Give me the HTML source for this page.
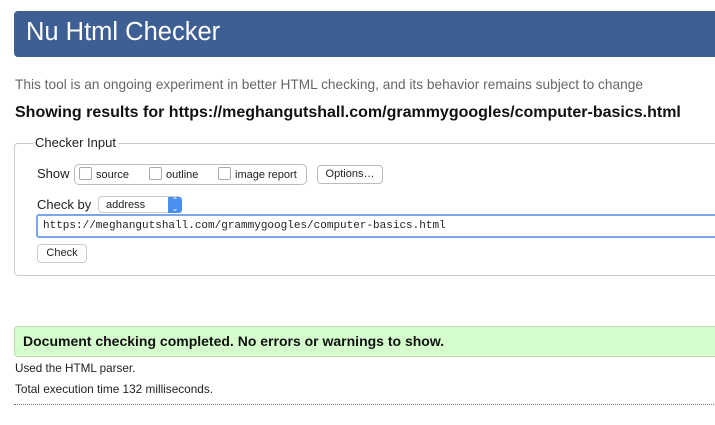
<!DOCTYPE html>
<html><head><style>
body{margin:0;width:715px;height:425px;overflow:hidden;background:#fff;font-family:"Liberation Sans",sans-serif;position:relative}
.a{position:absolute;white-space:nowrap}
.hdr{left:14px;top:11px;width:720px;height:46px;background:#3e5f93;border-radius:4px}
.cb{display:inline-block;width:11px;height:11px;border:1px solid #aaa;border-radius:2px;background:#fff;vertical-align:-2px;margin-right:4px}
</style></head><body>
<div class="a hdr"></div>
<div class="a" style="left:26px;top:18px;font-size:25.5px;color:#fff">Nu Html Checker</div>
<div class="a" style="left:15px;top:77px;font-size:13.7px;color:#666">This tool is an ongoing experiment in better HTML checking, and its behavior remains subject to change</div>
<div class="a" style="left:15px;top:104px;font-size:16px;font-weight:bold;color:#111">Showing results for https://meghangutshall.com/grammygoogles/computer-basics.html</div>
<div class="a" style="left:14px;top:143px;width:720px;height:131px;border:1px solid #ccc;border-radius:4px"></div>
<div class="a" style="left:33px;top:135px;font-size:13px;color:#222;background:#fff;padding:0 2px">Checker Input</div>
<div class="a" style="left:37px;top:166px;font-size:13px;color:#222">Show</div>
<div class="a" style="left:74px;top:164px;width:231px;height:19px;border:1px solid #bbb;border-radius:5px"></div>
<div class="a" style="left:79px;top:167px;font-size:11px;color:#222"><span class="cb"></span>source</div>
<div class="a" style="left:149px;top:167px;font-size:11px;color:#222"><span class="cb"></span>outline</div>
<div class="a" style="left:218px;top:167px;font-size:11px;color:#222"><span class="cb"></span>image report</div>
<div class="a" style="left:317px;top:165px;width:64px;height:17px;border:1px solid #bbb;border-radius:4px;font-size:11px;text-align:center;line-height:17px;color:#222">Options…</div>
<div class="a" style="left:37px;top:197px;font-size:13px;color:#222">Check by</div>
<div class="a" style="left:98px;top:196px;width:84px;height:17px;border:1px solid #ccc;border-radius:4px;font-size:11px;line-height:17px;color:#222;padding-left:7px;box-sizing:border-box">address</div>
<div class="a" style="left:168px;top:197px;width:14px;height:16px;background:#4a8ff0;border-radius:0 3px 3px 0;color:#fff;font-size:8px;line-height:8px;text-align:center">⌃<br>⌄</div>
<div class="a" style="left:36px;top:214px;width:690px;height:24px;border:2px solid #7aa8e6;border-radius:3px;box-sizing:border-box"></div>
<div class="a" style="left:43px;top:220px;font-family:'Liberation Mono',monospace;font-size:11px;color:#222">https://meghangutshall.com/grammygoogles/computer-basics.html</div>
<div class="a" style="left:37px;top:244px;width:48px;height:17px;border:1px solid #ccc;border-radius:4px;font-size:11px;text-align:center;line-height:17px;color:#222">Check</div>
<div class="a" style="left:14px;top:326px;width:720px;height:29px;background:#d5fccd;border:1px solid #c3d8bd;border-radius:3px"></div>
<div class="a" style="left:23px;top:333px;font-size:14px;font-weight:bold;color:#111">Document checking completed. No errors or warnings to show.</div>
<div class="a" style="left:15px;top:362px;font-size:11.7px;color:#222">Used the HTML parser.</div>
<div class="a" style="left:15px;top:382px;font-size:11.8px;color:#222">Total execution time 132 milliseconds.</div>
<div class="a" style="left:14px;top:404px;width:710px;border-top:1px dotted #777"></div>
</body></html>
